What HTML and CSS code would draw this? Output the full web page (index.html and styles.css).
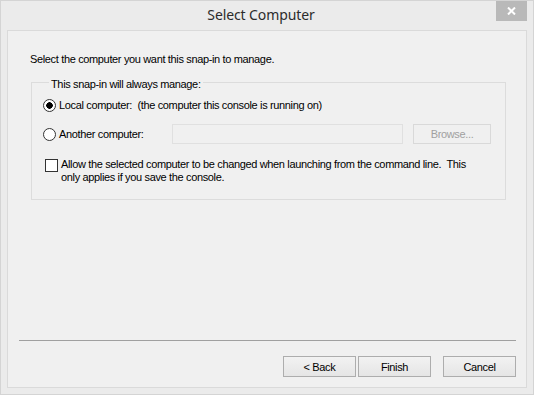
FILE: index.html
```html
<!DOCTYPE html>
<html lang="en">
<head>
  <meta charset="UTF-8" />
  <title>Select Computer</title>
  <link rel="stylesheet" href="styles.css">
</head>
<body>

  <div class="window">
    <!-- Title bar -->
    <div class="titlebar">
      <span class="title">Select Computer</span>
      <button class="close" aria-label="Close">
        <svg width="9" height="8" viewBox="0 0 9 8">
          <path d="M1 0.5 L8 7.5 M8 0.5 L1 7.5" stroke="#fff" stroke-width="2" fill="none"/>
        </svg>
      </button>
    </div>

    <div class="client">
      <p class="intro">Select the computer you want this snap-in to manage.</p>

      <fieldset class="group">
        <legend>This snap-in will always manage:</legend>

        <label class="option first">
          <input type="radio" name="target" checked />
          <span>Local computer:&nbsp; (the computer this console is running on)</span>
        </label>

        <div class="another">
          <label class="option">
            <input type="radio" name="target" />
            <span>Another computer:</span>
          </label>
          <input type="text" class="computer-name" disabled />
          <button class="btn browse" disabled>Browse...</button>
        </div>

        <label class="check">
          <input type="checkbox" />
          <span>Allow the selected computer to be changed when launching from the command line.&nbsp; This only applies if you save the console.</span>
        </label>
      </fieldset>

      <div class="spacer"></div>
      <div class="separator"></div>

      <div class="buttons">
        <button class="btn">&lt; Back</button>
        <button class="btn">Finish</button>
        <button class="btn cancel">Cancel</button>
      </div>
    </div>
  </div>

</body>
</html>
```

FILE: styles.css
```css
* {
  box-sizing: border-box;
}

html, body {
  margin: 0;
  height: 100%;
}

body {
  font-family: 'Liberation Sans', Arial, sans-serif;
  font-size: 11px;
  letter-spacing: -0.35px;
  color: #000;
  background: #ebebeb;
}

.window {
  position: relative;
  height: 395px;
  border: 1px solid #d4d4d4;
  background: #ebebeb;
  display: flex;
  flex-direction: column;
}

.titlebar {
  height: 29px;
  display: flex;
  justify-content: center;
  align-items: center;
}

.title {
  font-family: 'Noto Sans', 'Open Sans', sans-serif;
  font-size: 14px;
  letter-spacing: -0.1px;
  color: #2b2b2b;
  margin: -2px 12px 0 0;
}

.close {
  position: absolute;
  top: 0;
  right: 6px;
  width: 31px;
  height: 20px;
  border: none;
  padding: 0;
  background: #b9b9b9;
  display: flex;
  align-items: center;
  justify-content: center;
}

.client {
  flex: 1;
  margin: 0 6px 6px 6px;
  border: 1px solid #dadada;
  background: #f0f0f0;
  display: flex;
  flex-direction: column;
  padding: 0 20px 10px 22px;
}

.intro {
  margin: 22px 0 0 0;
  line-height: 13px;
}

.group {
  margin: 8px 0 0 1px;
  padding: 8px 0 0 11px;
  border: 1px solid #dcdcdc;
  height: 126px;
}

.group legend {
  padding: 4px 2px 0 2px;
  margin-left: 6px;
  line-height: 13px;
}

.option,
.check {
  display: flex;
  align-items: center;
  line-height: 13px;
}

.option input,
.check input {
  appearance: none;
  margin: 0 3px 0 0;
  width: 13px;
  height: 13px;
  flex: none;
  background: #fff;
  border: 1px solid #333;
}

.option input {
  border-radius: 50%;
}

.option input:checked {
  background: radial-gradient(circle, #000 0 3px, #fff 3.5px);
}

.another {
  display: flex;
  align-items: center;
  margin-top: 12px;
}

.another .option {
  width: 129px;
}

.computer-name {
  width: 231px;
  height: 20px;
  margin: 0;
  border: 1px solid #e0e0e0;
  background: #f0f0f0;
}

.btn {
  width: 73px;
  height: 21px;
  padding: 0;
  font-family: 'Liberation Sans', Arial, sans-serif;
  font-size: 11px;
  letter-spacing: -0.35px;
  color: #000;
  border: 1px solid #adadad;
  background: linear-gradient(#f2f2f2, #e5e5e5);
}

.btn:disabled {
  color: #a0a0a0;
  border-color: #d9d9d9;
  background: #f0f0f0;
}

.browse {
  width: 78px;
  height: 20px;
  margin-left: 10px;
}

.check {
  align-items: flex-start;
  margin: 14px 0 0 2px;
  width: 435px;
}

.check input {
  margin-top: 1px;
}

.spacer {
  flex: 1;
}

.separator {
  height: 1px;
  background: #a0a0a0;
  margin: 0 -10px 15px -11px;
}

.buttons {
  display: flex;
  justify-content: flex-end;
  gap: 2px;
  margin-right: -10px;
}

.cancel {
  margin-left: 10px;
}
```
